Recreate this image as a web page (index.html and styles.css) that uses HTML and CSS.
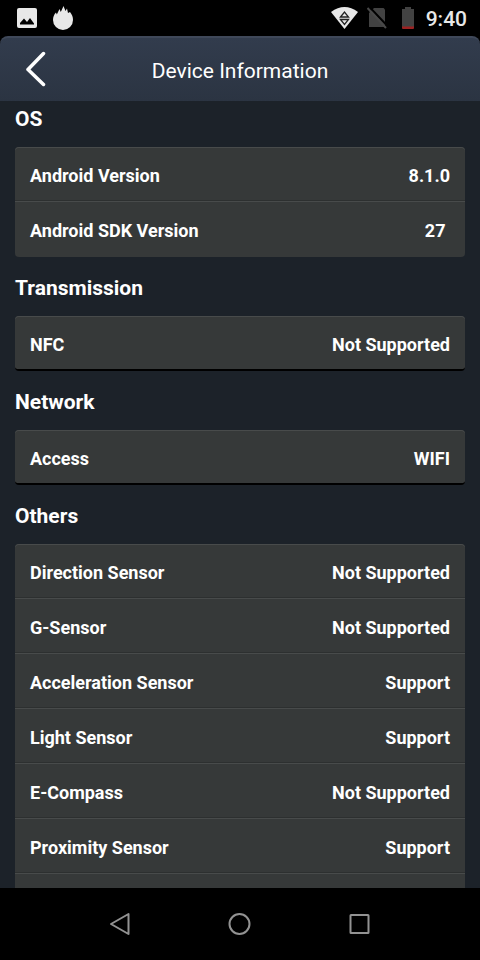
FILE: index.html
```html
<!DOCTYPE html>
<html lang="en">
<head>
<meta charset="utf-8">
<meta name="viewport" content="width=device-width, initial-scale=1">
<title>Device Information</title>
<link rel="stylesheet" href="styles.css">
</head>
<body>
<div class="status">
  <svg width="20" height="20" viewBox="0 0 20 20"><rect width="20" height="20" rx="2" fill="#e8e8e8"/><path d="M3 16.500V15l4-4.500 3 3.500 3-4 4 5.500v1z" fill="#000"/></svg>
  <svg class="flame" width="20" height="24" viewBox="0 0 20 24"><path d="M10 24A10 10 0 0 1 0 14C0 11 1 8.500 3 6.500L3.800 8.500 6.500 3l1.300 3L10.500 0l2 5L14 2.500l1 4.500L17 6C19 8.500 20 11 20 14A10 10 0 0 1 10 24z" fill="#e8e8e8"/></svg>
  <svg class="wifi" width="27" height="22" viewBox="0 0 27 22"><path d="M0 5Q13.500-5 27 5L13.500 22z" fill="#e8e8e8"/><path d="M9.500 10l4-5 4 5zM9.500 12.500l4 5 4-5z" fill="none" stroke="#222" stroke-width="1.300"/></svg>
  <svg class="sim" width="20" height="22" viewBox="0 0 20 22"><path d="M2 6l5-5h9.500L18 2.500V20H2z" fill="#424242"/><path d="M2-.5l19 20" stroke="#000" stroke-width="2"/><path d="M.5 1l18.500 20" stroke="#484848" stroke-width="2"/></svg>
  <svg class="battery" width="12" height="22" viewBox="0 0 12 22"><path d="M3 2V0h6v2h3v18H0V2z" fill="#424242"/><path d="M0 19.500h12V21q0 1-1 1H1q-1 0-1-1z" fill="#9c2222"/></svg>
  <time>9:40</time>
</div>
<header class="header">
  <button class="back" type="button" aria-label="Back"><svg width="20" height="36" viewBox="0 0 20 36"><path d="M17.500 2.500L2 18.500l15.500 15" fill="none" stroke="#fff" stroke-width="3.500" stroke-linecap="round" stroke-linejoin="round"/></svg></button>
  <h1>Device Information</h1>
</header>
<main class="content">
  <section>
    <h2>OS</h2>
    <dl class="card">
      <div><dt>Android Version</dt><dd>8.1.0</dd></div>
      <div><dt>Android SDK Version</dt><dd>27 </dd></div>
    </dl>
  </section>
  <section>
    <h2>Transmission</h2>
    <dl class="card single">
      <div><dt>NFC</dt><dd>Not Supported</dd></div>
    </dl>
  </section>
  <section>
    <h2>Network</h2>
    <dl class="card single">
      <div><dt>Access</dt><dd>WIFI</dd></div>
    </dl>
  </section>
  <section class="last">
    <h2>Others</h2>
    <dl class="card open">
      <div><dt>Direction Sensor</dt><dd>Not Supported</dd></div>
      <div><dt>G-Sensor</dt><dd>Not Supported</dd></div>
      <div><dt>Acceleration Sensor</dt><dd>Support</dd></div>
      <div><dt>Light Sensor</dt><dd>Support</dd></div>
      <div><dt>E-Compass</dt><dd>Not Supported</dd></div>
      <div><dt>Proximity Sensor</dt><dd>Support</dd></div>
    </dl>
  </section>
</main>
<nav class="nav">
  <button type="button" aria-label="Back"><svg width="24" height="24" viewBox="0 0 24 24"><path d="M20.500 2v20L3 12z"/></svg></button>
  <button type="button" aria-label="Home"><svg width="24" height="24" viewBox="0 0 24 24"><circle cx="11.500" cy="12" r="10"/></svg></button>
  <button type="button" aria-label="Recent apps"><svg width="24" height="24" viewBox="0 0 24 24"><rect x="2.500" y="3" width="18" height="18" rx=".5"/></svg></button>
</nav>
</body>
</html>
```
FILE: styles.css
```css
* { box-sizing: border-box; margin: 0; padding: 0; }
body {
  height: 100vh;
  display: flex;
  flex-direction: column;
  background: #000;
  color: #fff;
  font-family: Roboto, "Liberation Sans", sans-serif;
  overflow: hidden;
}
button { border: 0; background: none; display: flex; align-items: center; justify-content: center; }
svg { display: block; flex: none; }
.status { flex: none; height: 36px; padding: 0 13px 0 17px; display: flex; align-items: center; color: #e8e8e8; }
.flame { margin-left: 16px; }
.wifi { margin-left: auto; }
.sim { margin-left: 9px; }
.battery { margin-left: 15px; }
.status time { margin-left: 12px; padding-top: 2px; font-size: 21px; font-weight: 500; line-height: 24px; }
.header {
  flex: none;
  height: 65px;
  display: grid;
  grid-template-columns: 72px 1fr 72px;
  align-items: center;
  background: linear-gradient(#323c4d, #2b3442);
  border-top: 2px solid #3f4859;
  border-radius: 8px 8px 0 0;
}
.header h1 { font-size: 21px; line-height: 28px; font-weight: 400; text-align: center; padding-top: 2px; }
.back { height: 60px; padding-bottom: 2px; }
.content {
  flex: 1;
  min-height: 0;
  overflow: hidden;
  display: flex;
  flex-direction: column;
  gap: 13px;
  padding: 0 15px;
  background: #1c2229;
}
.content h2 { font-size: 21px; line-height: 24px; font-weight: 700; padding: 6px 0 16px; }
.card { background: #363939; border-radius: 4px; box-shadow: inset 0 1px #484b4b; }
.card div {
  height: 55px;
  padding: 4px 15px 0;
  display: flex;
  align-items: center;
  justify-content: space-between;
  font-size: 18px;
  line-height: 24px;
  font-weight: 700;
  border-bottom: 1px solid #484b4b;
  box-shadow: inset 0 -1px #2d3030;
}
.card div:last-child { border-color: transparent; box-shadow: none; }
.card dd { white-space: pre; }
.card.single { border-bottom: 2px solid #000; }
.card.single div { height: 53px; border: 0; }
.last { flex: 1; display: flex; flex-direction: column; }
.card.open { flex: 1; border-radius: 4px 4px 0 0; }
.card.open div:last-child { border-color: #484b4b; box-shadow: inset 0 -1px #2d3030; }
.nav { flex: none; height: 72px; padding: 0 12.5%; display: flex; background: #000; }
.nav button { flex: 1; }
.nav svg { fill: none; stroke: #929292; stroke-width: 2; stroke-linejoin: round; }
```
